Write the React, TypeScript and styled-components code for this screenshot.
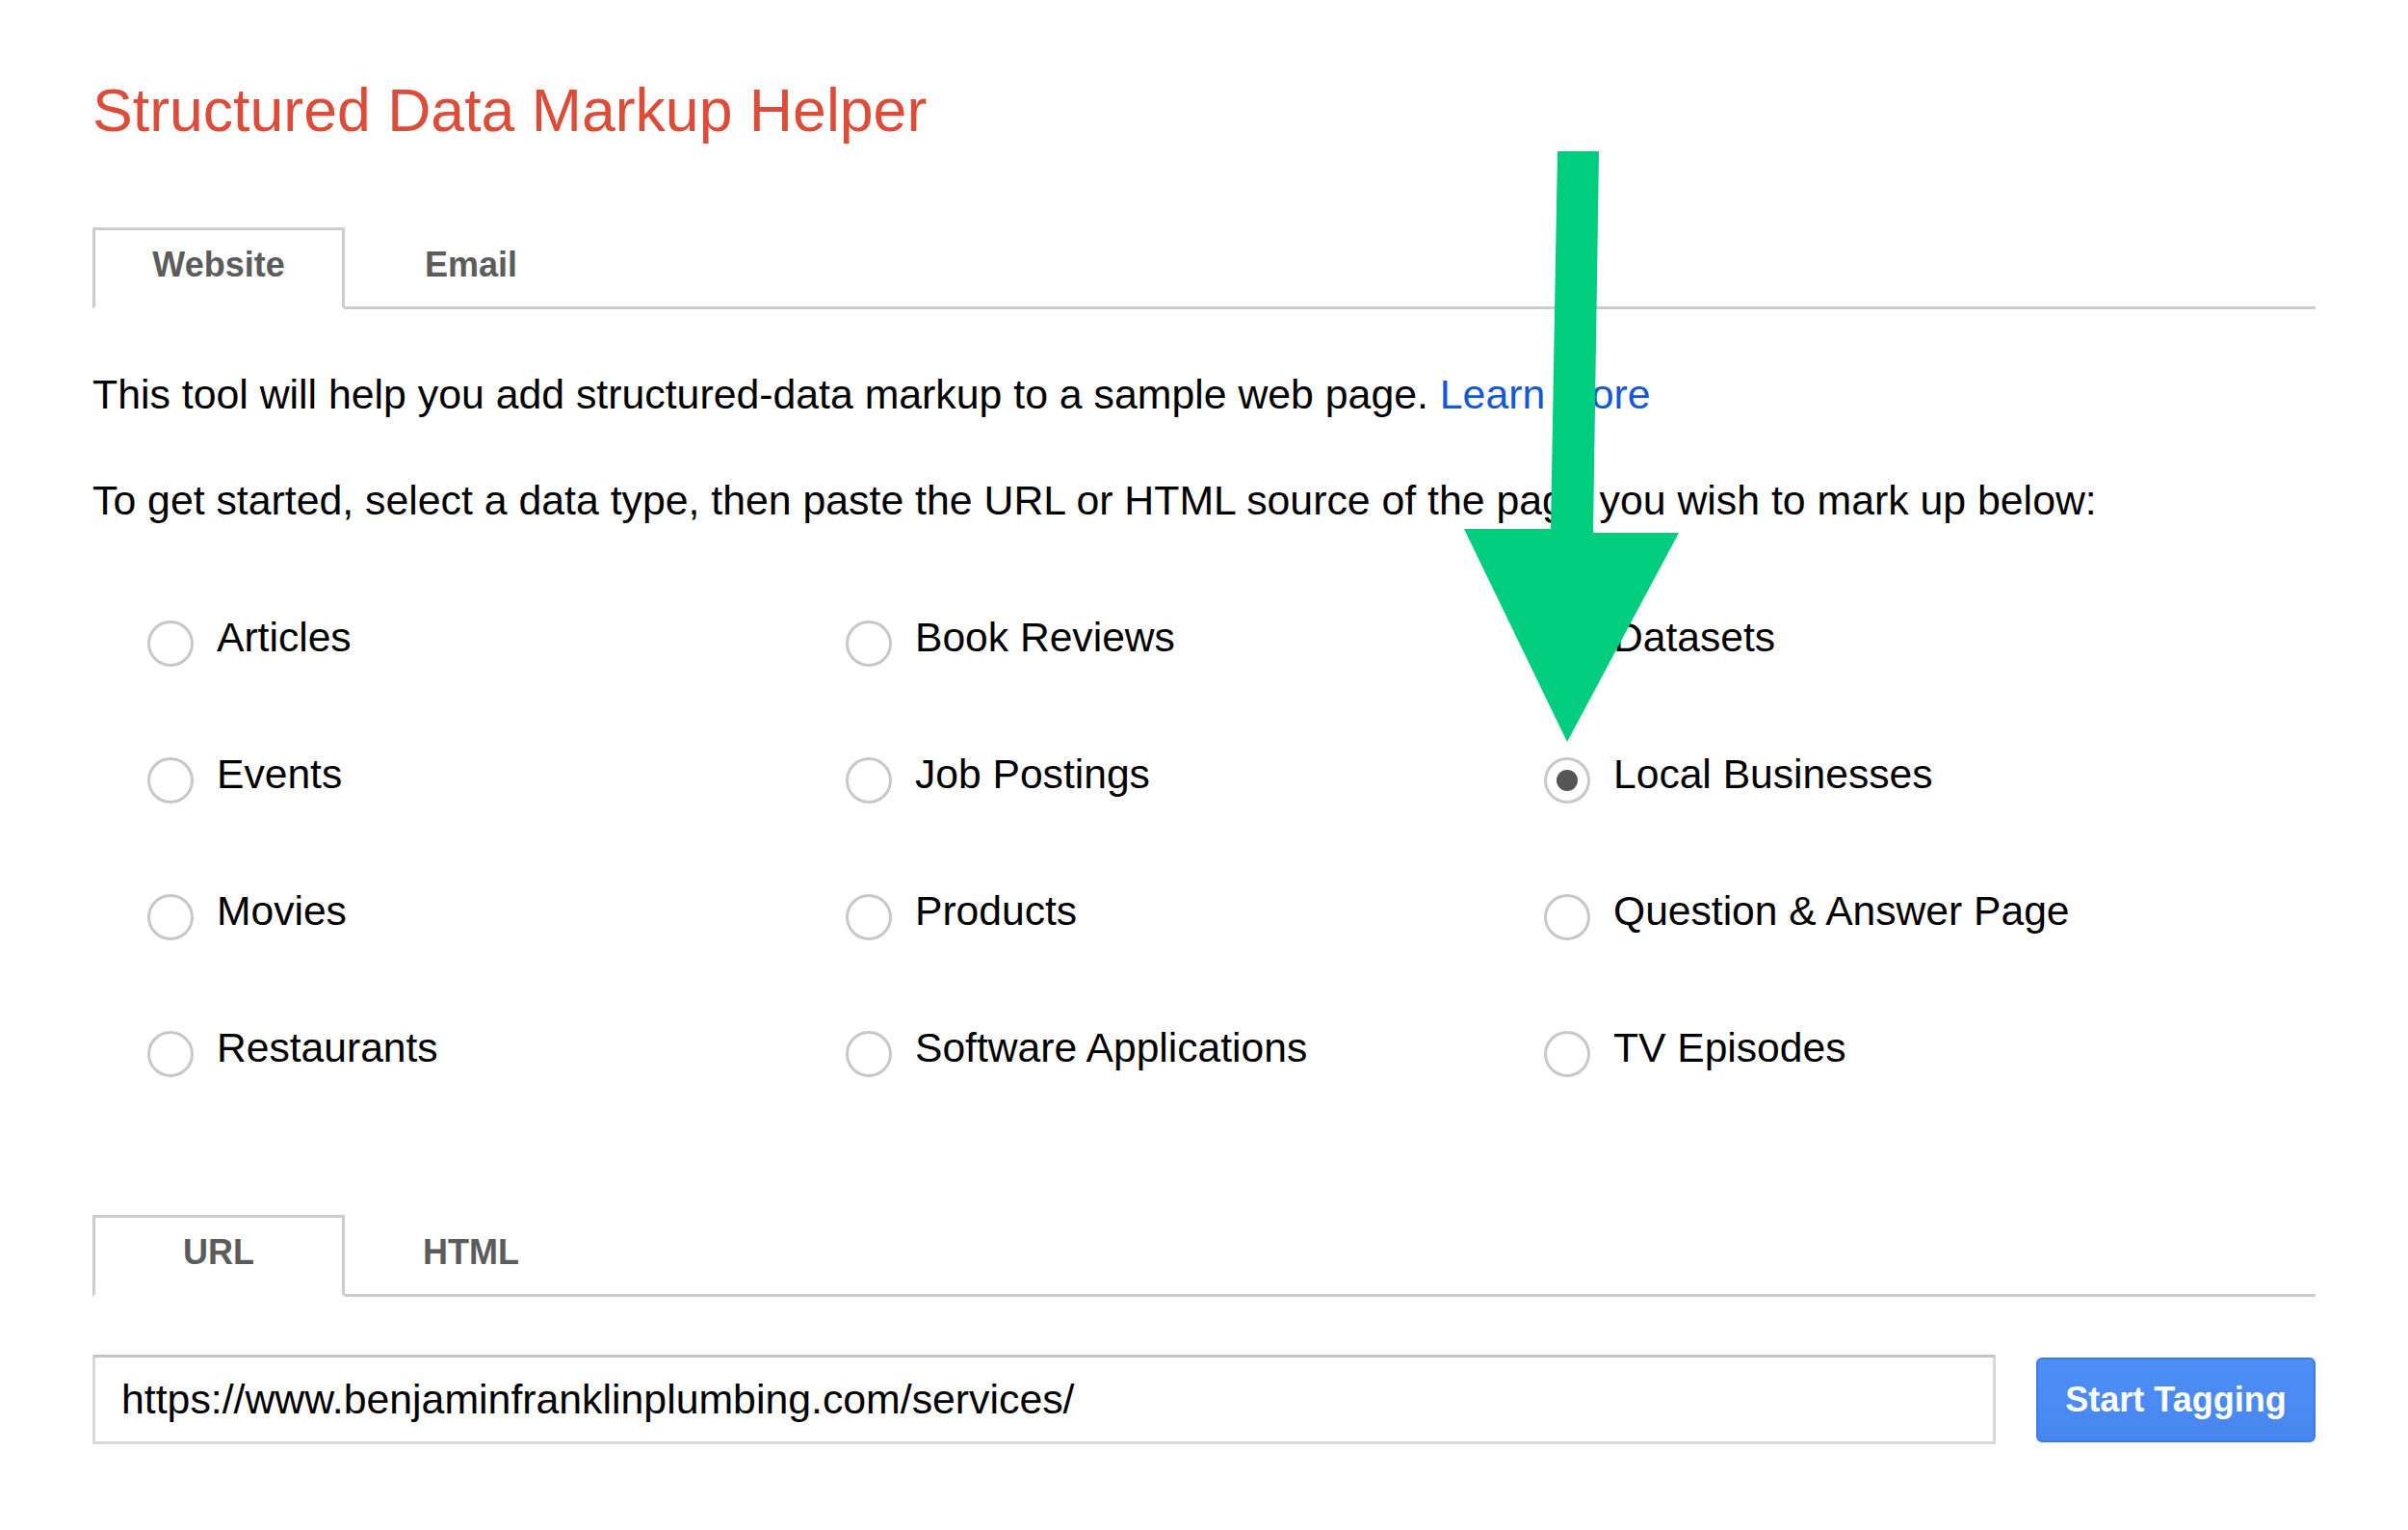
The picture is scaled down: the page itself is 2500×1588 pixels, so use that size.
import React from 'react'
import styled, {createGlobalStyle} from 'styled-components'

const GlobalStyle = createGlobalStyle`
  html, body {
    margin: 0;
    padding: 0;
    background: #ffffff;
  }
  body {
    font-family: "Liberation Sans", Arial, sans-serif;
    color: #000000;
  }
`

const dataTypes = [
    'Articles', 'Book Reviews', 'Datasets',
    'Events', 'Job Postings', 'Local Businesses',
    'Movies', 'Products', 'Question & Answer Page',
    'Restaurants', 'Software Applications', 'TV Episodes',
]

const App = () => {
    const [selected, setSelected] = React.useState('Local Businesses')
    const [mode, setMode] = React.useState('Website')
    const [source, setSource] = React.useState('URL')
    const [url, setUrl] = React.useState('https://www.benjaminfranklinplumbing.com/services/')

    return (
        <>
            <GlobalStyle/>
            <Page>
                <Title>Structured Data Markup Helper</Title>

                <TabBar $top={86}>
                    {['Website', 'Email'].map(t => (
                        <Tab key={t} $active={mode === t} onClick={() => setMode(t)}>{t}</Tab>
                    ))}
                </TabBar>

                <Paragraph $top={64}>
                    This tool will help you add structured-data markup to a sample web page. <Link href="#">Learn more</Link>
                </Paragraph>
                <Paragraph $top={62}>
                    To get started, select a data type, then paste the URL or HTML source of the page you wish to mark up below:
                </Paragraph>

                <Grid>
                    {dataTypes.map(type => (
                        <Option key={type} onClick={() => setSelected(type)}>
                            <Radio $checked={selected === type}/>
                            <Label>{type}</Label>
                        </Option>
                    ))}
                </Grid>

                <TabBar $top={150}>
                    {['URL', 'HTML'].map(t => (
                        <Tab key={t} $active={source === t} onClick={() => setSource(t)}>{t}</Tab>
                    ))}
                </TabBar>

                <InputRow>
                    <UrlInput value={url} onChange={e => setUrl(e.target.value)}/>
                    <StartButton>Start Tagging</StartButton>
                </InputRow>

                {/* green annotation arrow drawn over the page */}
                <Arrow width="2500" height="1588" viewBox="0 0 2500 1588">
                    <polygon
                        points="1617,157 1660,157 1654,553 1743,553 1627,770 1520,549 1610,549"
                        fill="#00cd7d"
                    />
                </Arrow>
            </Page>
        </>
    )
}

const Page = styled.div`
  position: relative;
  width: 2500px;
  height: 1588px;
  box-sizing: border-box;
  padding: 78px 96px 0 96px;
  overflow: hidden;
`

const Title = styled.h1`
  margin: 0;
  font-size: 62.6px;
  line-height: 72px;
  font-weight: 400;
  color: #dd4b39;
`

const TabBar = styled.div`
  display: flex;
  margin-top: ${p => p.$top}px;
  border-bottom: 3px solid #cccccc;
`

const Tab = styled.div`
  width: 262px;
  height: 85px;
  box-sizing: border-box;
  padding-top: 14px;
  margin-bottom: -3px;
  line-height: 44px;
  text-align: center;
  font-size: 36px;
  font-weight: 700;
  color: #5c5c5c;
  cursor: pointer;
  border: 3px solid ${p => (p.$active ? '#cccccc' : 'transparent')};
  border-bottom-color: ${p => (p.$active ? '#ffffff' : 'transparent')};
`

const Paragraph = styled.p`
  margin: ${p => p.$top}px 0 0 0;
  font-size: 42.8px;
  line-height: 48px;
  white-space: nowrap;
`

const Link = styled.a`
  color: #1558d6;
  text-decoration: none;
`

const Grid = styled.div`
  display: grid;
  grid-template-columns: repeat(3, 725px);
  row-gap: 94px;
  margin-top: 94px;
  padding-left: 57px;
`

const Option = styled.label`
  display: flex;
  align-items: flex-start;
  gap: 24px;
  height: 48px;
  cursor: pointer;
`

const Radio = styled.span`
  position: relative;
  flex: none;
  width: 48px;
  height: 48px;
  margin-top: 7px;
  box-sizing: border-box;
  border: 3px solid #c8c8c8;
  border-radius: 50%;
  background: #ffffff;

  &::after {
    content: '';
    display: ${p => (p.$checked ? 'block' : 'none')};
    position: absolute;
    left: 50%;
    top: 50%;
    width: 22px;
    height: 22px;
    margin: -11px 0 0 -11px;
    border-radius: 50%;
    background: #555555;
  }
`

const Label = styled.span`
  font-size: 42.6px;
  line-height: 48px;
  white-space: nowrap;
`

const InputRow = styled.div`
  display: flex;
  align-items: center;
  gap: 42px;
  margin-top: 60px;
`

const UrlInput = styled.input`
  flex: 1;
  height: 93px;
  box-sizing: border-box;
  padding: 0 24px 0 27px;
  border: 3px solid #d8d8d8;
  border-top-color: #c2c2c2;
  border-radius: 0;
  font-family: "Liberation Sans", Arial, sans-serif;
  font-size: 42.8px;
  color: #000000;
  outline: none;
`

const StartButton = styled.button`
  flex: none;
  width: 290px;
  height: 88px;
  box-sizing: border-box;
  border: 2px solid #3a7cf0;
  border-radius: 6px;
  background: linear-gradient(#4d8ff7, #4886ee);
  color: #ffffff;
  font-family: "Liberation Sans", Arial, sans-serif;
  font-size: 36px;
  font-weight: 700;
  cursor: pointer;
`

const Arrow = styled.svg`
  position: absolute;
  left: 0;
  top: 0;
  pointer-events: none;
`

export default App
